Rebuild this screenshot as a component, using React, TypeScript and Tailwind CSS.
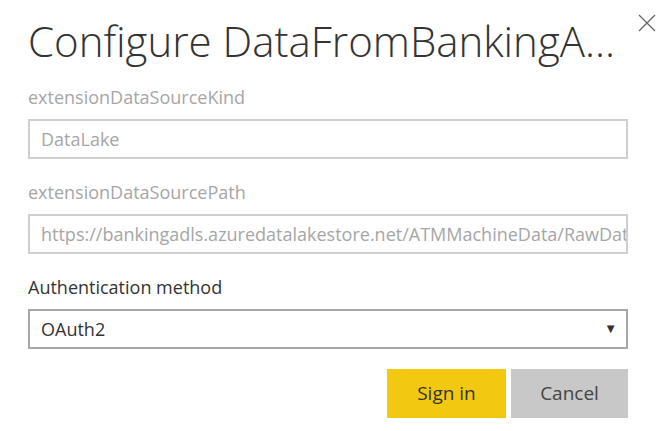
import React from "react";

const font = { fontFamily: '"Open Sans", "Noto Sans", sans-serif' };

export default function App() {
  return (
    <div className="relative min-h-screen w-[658px] bg-white font-['Open_Sans',sans-serif]" style={font}>
      <button aria-label="Close" className="absolute right-[2px] top-[14px] h-[18px] w-[18px] text-[#666]">
        <svg viewBox="0 0 18 18" width="18" height="18" fill="none" stroke="currentColor" strokeWidth="1.3">
          <path d="M1 1L17 17M17 1L1 17" />
        </svg>
      </button>

      <div className="flex w-[628px] flex-col pl-[28px] pt-[17px]">
        <h1 className="text-[42px] font-light leading-[48px] text-[#333] whitespace-nowrap">Configure DataFromBankingA...</h1>

        <label className="mt-[20px] text-[18px] leading-[24px] text-[#a6a6a6]">extensionDataSourceKind</label>
        <div className="mt-[10px] flex h-[40px] items-center border-2 border-[#cfcfcf] pl-[11px] text-[18px] text-[#a6a6a6]">DataLake</div>

        <label className="mt-[21px] text-[18px] leading-[24px] text-[#a6a6a6]">extensionDataSourcePath</label>
        <div className="mt-[10px] flex h-[40px] items-center overflow-hidden whitespace-nowrap border-2 border-[#cfcfcf] pl-[11px] text-[18px] text-[#a6a6a6]">
          https://bankingadls.azuredatalakestore.net/ATMMachineData/RawData
        </div>

        <label className="mt-[21px] text-[18px] leading-[24px] text-[#333]">Authentication method</label>
        <div className="mt-[10px] flex h-[40px] items-center justify-between border-2 border-[#a6a6a6] pl-[11px] pr-[9px] text-[18px] text-[#333]">
          <span>OAuth2</span>
          <span className="text-[13px] text-[#333]">▼</span>
        </div>

        <div className="mt-[20px] flex justify-end gap-[5px]">
          <button className="h-[49px] w-[119px] bg-[#f2c811] text-[19px] text-[#333]">Sign in</button>
          <button className="h-[49px] w-[117px] bg-[#c8c8c8] text-[19px] text-[#444]">Cancel</button>
        </div>
      </div>
    </div>
  );
}
